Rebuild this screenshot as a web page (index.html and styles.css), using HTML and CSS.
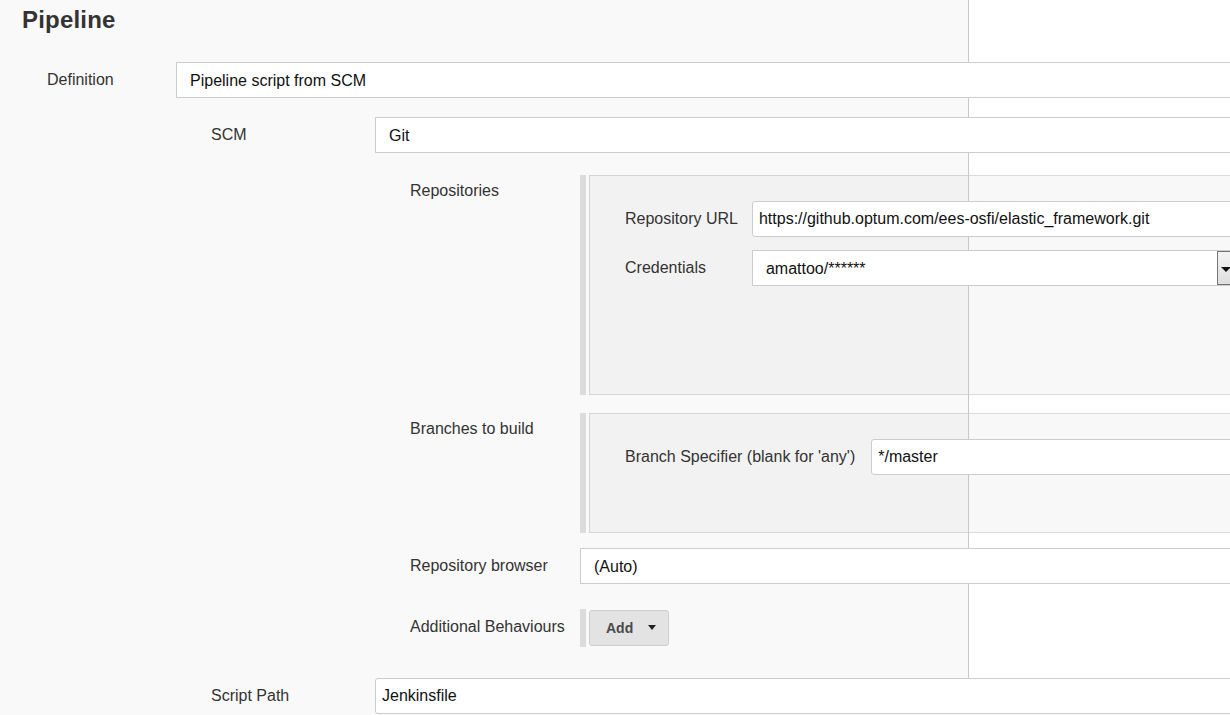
FILE: index.html
```html
<!DOCTYPE html>
<html>
<head>
<meta charset="utf-8">
<title>Pipeline</title>
<link rel="stylesheet" href="styles.css">
</head>
<body>
<div class="page">
  <h2 class="title">Pipeline</h2>
  <div class="form">
    <div class="row r-def">
      <div class="label l1">Definition</div>
      <div class="field select">Pipeline script from SCM</div>
    </div>
    <div class="nest1">
      <div class="row r-scm">
        <div class="label l2">SCM</div>
        <div class="field select">Git</div>
      </div>
      <div class="nest2">
        <div class="row r-repos">
          <div class="label l3 label-top">Repositories</div>
          <div class="chunk">
            <div class="bar"></div>
            <div class="panel panel-repos">
              <div class="grid">
                <div class="label">Repository URL</div>
                <div class="field text">https://github.optum.com/ees-osfi/elastic_framework.git</div>
                <div class="label">Credentials</div>
                <div class="field select creds">amattoo/******<span class="drop"></span></div>
              </div>
            </div>
          </div>
        </div>
        <div class="row r-branches">
          <div class="label l3 label-top">Branches to build</div>
          <div class="chunk">
            <div class="bar"></div>
            <div class="panel panel-branches">
              <div class="grid grid-wide">
                <div class="label">Branch Specifier (blank for 'any')</div>
                <div class="field text">*/master</div>
              </div>
            </div>
          </div>
        </div>
        <div class="row r-browser">
          <div class="label l3">Repository browser</div>
          <div class="field select">(Auto)</div>
        </div>
        <div class="row r-addl">
          <div class="label l3">Additional Behaviours</div>
          <div class="add-wrap">
            <div class="bar bar-short"></div>
            <button class="add-btn">Add<span class="caret"></span></button>
          </div>
        </div>
      </div>
      <div class="row r-script">
        <div class="label l2">Script Path</div>
        <div class="field text">Jenkinsfile</div>
      </div>
    </div>
  </div>
</div>
<div class="overlay"></div>
</body>
</html>
```

FILE: styles.css
```css
html, body {
  margin: 0;
  padding: 0;
  overflow: hidden;
}
body {
  position: relative;
  background: #f9f9f9;
  font-family: "Liberation Sans", Arial, Helvetica, sans-serif;
  font-size: 16px;
  color: #333;
  width: 1230px;
  height: 715px;
}
* { box-sizing: border-box; }

.page {
  width: 1320px;
  padding-left: 22px;
}
.title {
  margin: 0;
  padding-top: 6px;
  font-size: 24px;
  font-weight: bold;
  line-height: 28px;
  color: #333;
  letter-spacing: 0.2px;
}
.form {
  padding-left: 25px;
}
.row {
  display: flex;
  align-items: flex-start;
}
.label {
  line-height: 20px;
  padding-top: 8px;
  color: #333;
  white-space: nowrap;
}
.label-top { padding-top: 6px; }
.l1 { width: 129px; flex: none; }
.l2 { width: 164px; flex: none; }
.l3 { width: 170px; flex: none; }

.field {
  position: relative;
  z-index: 2;
  flex: 1;
  height: 36px;
  background: #fff;
  border: 1px solid #cccccc;
  color: #111;
  line-height: 20px;
  display: flex;
  align-items: center;
  white-space: nowrap;
}
.select {
  padding: 2px 13px 0;
}
.text {
  padding: 0 6px;
  border-radius: 3px;
}

.r-def { margin-top: 28px; }
.nest1 { margin-left: 164px; }
.r-scm { margin-top: 19px; }
.nest2 { margin-left: 199px; }
.r-repos { margin-top: 22px; }
.r-branches { margin-top: 18px; }
.r-browser { margin-top: 15px; }
.r-addl { margin-top: 25px; }
.r-script { margin-top: 31px; }

.chunk {
  flex: 1;
  display: flex;
}
.bar {
  width: 6px;
  flex: none;
  background: #dcdcdc;
}
.panel {
  flex: 1;
  margin-left: 3px;
  background: #f2f2f2;
  border: 1px solid #d5d5d5;
  padding: 25px 0 0 35px;
}
.panel-repos { height: 220px; }
.panel-branches { height: 120px; }

.grid {
  display: grid;
  grid-template-columns: auto 1fr;
  column-gap: 14px;
  row-gap: 13px;
  align-items: start;
}
.grid-wide { column-gap: 16px; }
.grid .field { width: 100%; }
.grid .creds {
  width: 486px;
  justify-self: start;
}
.drop {
  position: absolute;
  right: 0;
  top: 0;
  bottom: 0;
  width: 20px;
  border: 1px solid #747474;
  background: linear-gradient(#f4f4f4, #dedede);
}
.drop::after {
  content: "";
  position: absolute;
  left: 3px;
  top: 15px;
  border-left: 5px solid transparent;
  border-right: 5px solid transparent;
  border-top: 5px solid #111;
}

.add-wrap {
  display: flex;
  height: 38px;
}
.bar-short { height: 38px; }
.add-btn {
  margin: 1px 0 0 3px;
  width: 80px;
  height: 36px;
  background: #e3e3e3;
  border: 1px solid #cfcfcf;
  border-radius: 3px;
  font-family: "Liberation Sans", Arial, Helvetica, sans-serif;
  font-size: 14px;
  font-weight: bold;
  color: #4a4a4a;
  text-align: left;
  padding: 0 0 0 16px;
  display: flex;
  align-items: center;
}
.caret {
  display: inline-block;
  margin-left: 15px;
  margin-top: -2px;
  border-left: 4.5px solid transparent;
  border-right: 4.5px solid transparent;
  border-top: 5px solid #222;
}

.overlay {
  position: absolute;
  z-index: 1;
  left: 968px;
  top: 0;
  width: 262px;
  height: 678px;
  border-left: 1px solid #c8c8c8;
  backdrop-filter: brightness(1.026);
}
```
